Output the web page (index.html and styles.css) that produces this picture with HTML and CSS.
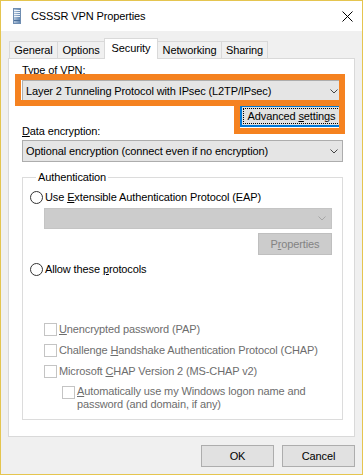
FILE: index.html
```html
<!DOCTYPE html>
<html>
<head>
<meta charset="utf-8">
<link rel="stylesheet" href="styles.css">
</head>
<body>
<div class="window">
  <div class="titlebar">
    <svg class="app-icon" width="8" height="16" viewBox="0 0 8 16">
      <defs>
        <linearGradient id="ig" x1="0" y1="0" x2="1" y2="0">
          <stop offset="0" stop-color="#b9cbe0"/>
          <stop offset="1" stop-color="#5d82ad"/>
        </linearGradient>
      </defs>
      <rect x="0.5" y="0.5" width="7" height="15" fill="url(#ig)" stroke="#6f8db1"/>
      <path d="M1 2.5h6M1 4.5h6M1 6.5h6M1 8.5h6" stroke="#eef3f8" stroke-width="1"/>
      <path d="M1 12.5h6" stroke="#4b6f99" stroke-width="1"/>
    </svg>
    <span class="title">CSSSR VPN Properties</span>
    <svg class="close" width="11" height="11" viewBox="0 0 11 11">
      <path d="M0.5 0.5L10.5 10.5M10.5 0.5L0.5 10.5" stroke="#000" stroke-width="1"/>
    </svg>
  </div>
  <div class="content">
    <div class="tabs">
      <div class="tab t-general">General</div>
      <div class="tab t-options">Options</div>
      <div class="tab t-security active">Security</div>
      <div class="tab t-networking">Networking</div>
      <div class="tab t-sharing">Sharing</div>
    </div>
    <div class="panel">
      <div class="label vpn-label">Type of VPN:</div>
      <div class="combo">
        <span class="combo-text">Layer 2 Tunneling Protocol with IPsec (L2TP/IPsec)</span>
        <svg class="chev" width="8" height="5" viewBox="0 0 8 5"><path d="M0.5 0.5L4 4L7.5 0.5" fill="none" stroke="#444" stroke-width="1"/></svg>
      </div>
      <div class="adv-row">
        <button class="btn btn-focus"><span>Advanced <u>s</u>ettings</span></button>
      </div>
      <div class="label enc-label"><u>D</u>ata encryption:</div>
      <div class="combo">
        <span class="combo-text">Optional encryption (connect even if no encryption)</span>
        <svg class="chev" width="8" height="5" viewBox="0 0 8 5"><path d="M0.5 0.5L4 4L7.5 0.5" fill="none" stroke="#444" stroke-width="1"/></svg>
      </div>
      <fieldset class="group">
        <legend>Authentication</legend>
        <div class="opt r1"><span class="radio"></span><span>Use <u>E</u>xtensible Authentication Protocol (EAP)</span></div>
        <div class="combo disabled eap-combo">
          <svg class="chev" width="8" height="5" viewBox="0 0 8 5"><path d="M0.5 0.5L4 4L7.5 0.5" fill="none" stroke="#a6a6a6" stroke-width="1"/></svg>
        </div>
        <div class="prop-row"><button class="btn btn-disabled"><span>P<u>r</u>operties</span></button></div>
        <div class="opt r2"><span class="radio"></span><span>Allow these <u>p</u>rotocols</span></div>
        <div class="opt dis c1"><span class="check"></span><span><u>U</u>nencrypted password (PAP)</span></div>
        <div class="opt dis c2"><span class="check"></span><span>Challenge <u>H</u>andshake Authentication Protocol (CHAP)</span></div>
        <div class="opt dis c3"><span class="check"></span><span>Microsoft <u>C</u>HAP Version 2 (MS-CHAP v2)</span></div>
        <div class="opt dis c4"><span class="check"></span><span class="multi"><u>A</u>utomatically use my Windows logon name and<br>password (and domain, if any)</span></div>
      </fieldset>
    </div>
    <div class="footer">
      <button class="btn btn-foot"><span>OK</span></button>
      <button class="btn btn-foot"><span>Cancel</span></button>
    </div>
  </div>
  <div class="mark mark1"></div>
  <div class="mark mark2"></div>
</div>
</body>
</html>
```

FILE: styles.css
```css
* { box-sizing: border-box; }
html, body { margin: 0; padding: 0; }
body {
  width: 363px;
  height: 475px;
  overflow: hidden;
  background: #fff;
  font-family: "Liberation Sans", Arial, sans-serif;
  font-size: 11px;
  line-height: 15px;
  letter-spacing: -0.12px;
  color: #000;
}
u { text-decoration: underline; text-underline-offset: 1px; }

.window {
  position: relative;
  width: 363px;
  height: 475px;
  border: 1px solid #e5c54f;
  background: #f0f0f0;
  display: flex;
  flex-direction: column;
}

.titlebar {
  height: 30px;
  flex: none;
  background: #fff;
  display: flex;
  align-items: center;
}
.app-icon { margin-left: 12px; flex: none; }
.title { margin-left: 10px; font-size: 11px; }
.close { margin-left: auto; margin-right: 9px; flex: none; }

.content {
  flex: 1;
  padding: 7px 7px 0 7px;
}

.tabs {
  display: flex;
  align-items: flex-end;
  height: 20px;
  padding-left: 1px;
}
.tab {
  height: 17px;
  padding-top: 1px;
  text-align: center;
  background: #f0f0f0;
  border-top: 1px solid #d9d9d9;
  border-left: 1px solid #d9d9d9;
}
.tab.active {
  position: relative;
  z-index: 1;
  height: 21px;
  margin-bottom: -1px;
  padding-top: 2px;
  background: #fff;
  border-right: 1px solid #d9d9d9;
}
.t-general { width: 48px; }
.t-options { width: 47px; }
.t-security { width: 54px; }
.t-networking { width: 63px; border-left: none; }
.t-sharing { width: 47px; border-right: 1px solid #d9d9d9; }

.panel {
  height: 379px;
  background: #fff;
  border: 1px solid #d9d9d9;
  padding: 4px 11px 0 13px;
}

.label { height: 15px; }
.vpn-label { margin-bottom: 2px; }
.enc-label { margin-top: -3px; margin-bottom: 1px; }

.combo {
  display: flex;
  align-items: center;
  height: 22px;
  padding: 0 4px 0 3px;
  border: 1px solid #adadad;
  background: #e5e5e5;
  white-space: nowrap;
}
.chev { margin-left: auto; flex: none; }

.adv-row {
  display: flex;
  justify-content: flex-end;
  margin-top: 3px;
}

.btn {
  font: inherit;
  letter-spacing: inherit;
  color: #000;
  margin: 0;
  padding: 0;
  height: 22px;
  background: #e1e1e1;
  border: 1px solid #adadad;
  display: flex;
  align-items: center;
  justify-content: center;
  white-space: nowrap;
}
.btn-focus {
  width: 103px;
  border-color: #0078d7;
  box-shadow: inset 0 0 0 1px #0078d7;
  outline: 1px dotted #000;
  outline-offset: -4px;
}

.group {
  margin: 8px 0 0 0;
  padding: 0 10px 0 7px;
  height: 250px;
  min-width: 0;
  border: 1px solid #dcdcdc;
}
.group legend {
  margin-left: 6px;
  padding: 0 2px;
  line-height: 15px;
}

.opt {
  display: flex;
  align-items: center;
  height: 15px;
  white-space: nowrap;
}
.radio {
  flex: none;
  width: 13px;
  height: 13px;
  border: 1px solid #333;
  border-radius: 50%;
  background: #fff;
  margin-right: 2px;
}
.check {
  flex: none;
  width: 13px;
  height: 13px;
  border: 1px solid #c4c4c4;
  background: #fff;
  margin-right: 2px;
}
.dis { color: #6d6d6d; }

.r1 { margin-top: 5px; }
.eap-combo {
  margin: 3px 0 0 14px;
  height: 21px;
  background: #cccccc;
  border-color: #c4c4c4;
  padding-right: 5px;
}
.prop-row {
  display: flex;
  justify-content: flex-end;
  margin-top: 4px;
}
.btn-disabled {
  width: 74px;
  background: #cccccc;
  border-color: #bfbfbf;
  color: #838383;
}
.r2 { margin-top: 7px; }
.c1 { margin: 45px 0 0 14px; }
.c2 { margin: 6px 0 0 14px; }
.c3 { margin: 6px 0 0 14px; }
.c4 {
  margin: 6px 0 0 32px;
  align-items: flex-start;
  height: auto;
}
.c4 .check { margin-top: 1px; }
.multi { line-height: 13px; }

.footer {
  display: flex;
  justify-content: flex-end;
  gap: 8px;
  margin-top: 8px;
}
.btn-foot { width: 73px; }

.mark {
  position: absolute;
  border: 6px solid #f58220;
  pointer-events: none;
}
.mark1 {
  left: 14px;
  top: 73px;
  width: 330px;
  height: 32px;
}
.mark2 {
  left: 233px;
  top: 105px;
  width: 111px;
  height: 28px;
  border-top: none;
}
```
